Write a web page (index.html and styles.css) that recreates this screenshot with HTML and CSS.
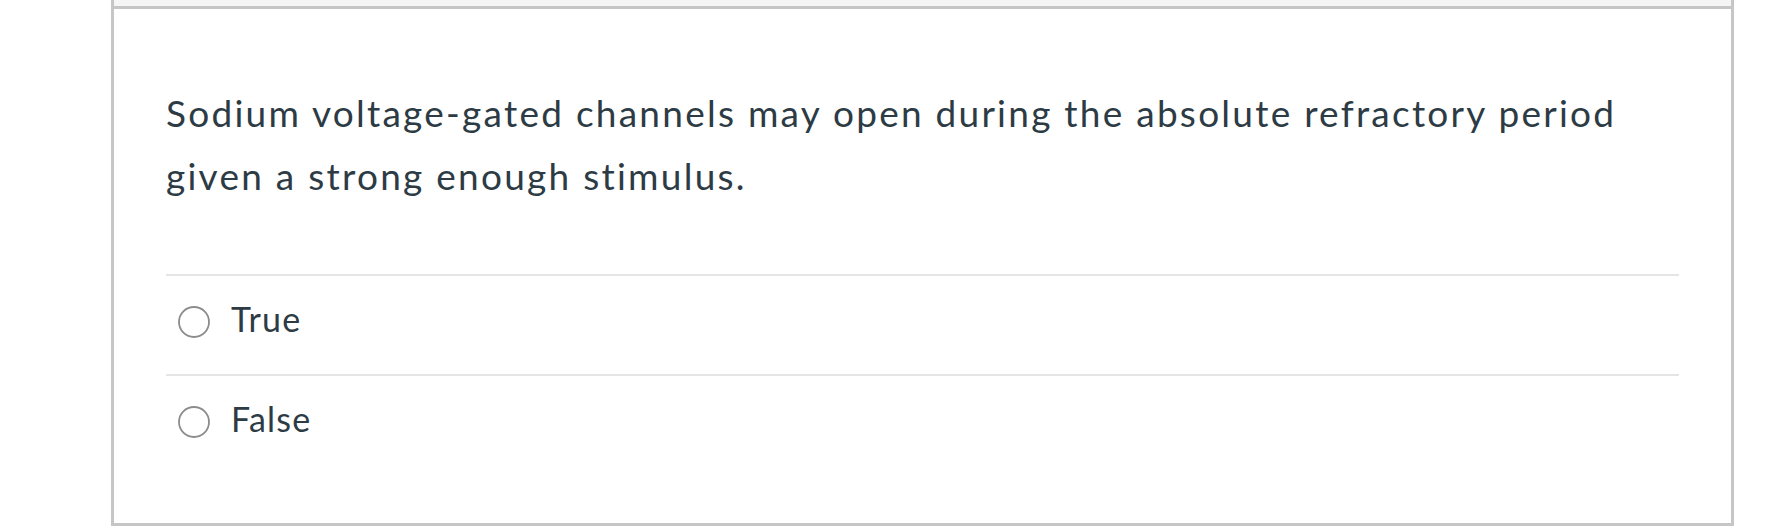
FILE: index.html
```html
<!DOCTYPE html>
<html>
<head>
<meta charset="utf-8">
<link rel="stylesheet" href="styles.css">
</head>
<body>
<div class="page">
  <div class="question">
    <div class="q-header"></div>
    <div class="q-content">
      <p class="q-text">Sodium voltage-gated channels may open during the absolute refractory period given a strong enough stimulus.</p>
      <div class="answers">
        <label class="answer">
          <svg class="radio" width="34" height="34" viewBox="0 0 34 34"><circle cx="17" cy="17" r="15" fill="#fff" stroke="#8c8c8c" stroke-width="1.8"/></svg>
          <span class="a-text">True</span>
        </label>
        <label class="answer">
          <svg class="radio" width="34" height="34" viewBox="0 0 34 34"><circle cx="17" cy="17" r="15" fill="#fff" stroke="#8c8c8c" stroke-width="1.8"/></svg>
          <span class="a-text">False</span>
        </label>
      </div>
    </div>
  </div>
</div>
</body>
</html>
```
FILE: styles.css
```css
html, body {
  margin: 0;
  padding: 0;
  background: #ffffff;
}
body {
  font-family: Lato, "Liberation Sans", sans-serif;
  color: #2d3b45;
}
.page {
  padding-left: 111px;
  width: 1623px;
}
.question {
  border: 3px solid #c6c6c6;
  border-top: none;
  height: 526px;
  box-sizing: border-box;
}
.q-header {
  height: 6px;
  background: #f5f5f5;
  border-bottom: 3px solid #c6c6c6;
}
.q-content {
  padding: 72px 52px 0 52px;
}
.q-text {
  margin: 0;
  font-size: 37px;
  line-height: 63px;
  letter-spacing: 2.25px;
}
.answers {
  margin-top: 67px;
}
.answer {
  display: flex;
  align-items: center;
  gap: 20px;
  border-top: 2px solid #e3e5e7;
  padding-left: 11px;
  padding-bottom: 6px;
  box-sizing: border-box;
  height: 100px;
}
.radio {
  flex: none;
}
.a-text {
  font-size: 34px;
  letter-spacing: 1.2px;
  padding-bottom: 8px;
}
```
